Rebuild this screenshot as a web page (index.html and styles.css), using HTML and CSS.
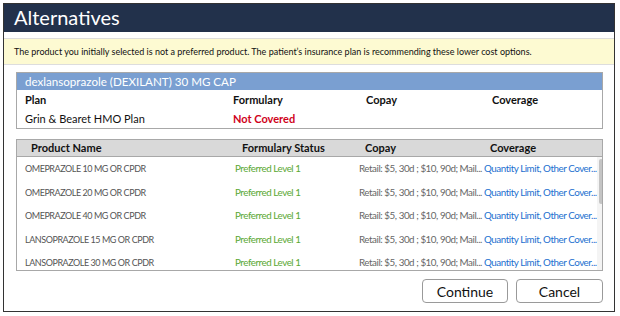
FILE: index.html
```html
<!DOCTYPE html>
<html lang="en">
<head>
    <meta charset="UTF-8">
    <title>Alternatives</title>
    <link rel="stylesheet" href="styles.css">
</head>
<body>
    <div class="dialog">
        <div class="title-bar">Alternatives</div>
        <div class="notice">The product you initially selected is not a preferred product. The patient’s insurance plan is recommending these lower cost options.</div>

        <div class="plan-box">
            <div class="drug-name">dexlansoprazole (DEXILANT) 30 MG CAP</div>
            <div class="plan-row plan-head">
                <span class="c-plan">Plan</span>
                <span class="c-form">Formulary</span>
                <span class="c-copay">Copay</span>
                <span class="c-cov">Coverage</span>
            </div>
            <div class="plan-row">
                <span class="c-plan">Grin &amp; Bearet HMO Plan</span>
                <span class="c-form not-covered">Not Covered</span>
                <span class="c-copay"></span>
                <span class="c-cov"></span>
            </div>
        </div>

        <div class="products">
            <div class="prod-head">
                <span class="p-name">Product Name</span>
                <span class="p-status">Formulary Status</span>
                <span class="p-copay">Copay</span>
                <span class="p-cov">Coverage</span>
            </div>
            <div class="prod-body">
                <div class="prod-rows">
                    <div class="prod-row">
                        <span class="p-name">OMEPRAZOLE 10 MG OR CPDR</span>
                        <span class="p-status">Preferred Level 1</span>
                        <span class="p-copay">Retail: $5, 30d ; $10, 90d; Mail...</span>
                        <span class="p-cov">Quantity Limit, Other Cover...</span>
                    </div>
                    <div class="prod-row">
                        <span class="p-name">OMEPRAZOLE 20 MG OR CPDR</span>
                        <span class="p-status">Preferred Level 1</span>
                        <span class="p-copay">Retail: $5, 30d ; $10, 90d; Mail...</span>
                        <span class="p-cov">Quantity Limit, Other Cover...</span>
                    </div>
                    <div class="prod-row">
                        <span class="p-name">OMEPRAZOLE 40 MG OR CPDR</span>
                        <span class="p-status">Preferred Level 1</span>
                        <span class="p-copay">Retail: $5, 30d ; $10, 90d; Mail...</span>
                        <span class="p-cov">Quantity Limit, Other Cover...</span>
                    </div>
                    <div class="prod-row">
                        <span class="p-name">LANSOPRAZOLE 15 MG OR CPDR</span>
                        <span class="p-status">Preferred Level 1</span>
                        <span class="p-copay">Retail: $5, 30d ; $10, 90d; Mail...</span>
                        <span class="p-cov">Quantity Limit, Other Cover...</span>
                    </div>
                    <div class="prod-row">
                        <span class="p-name">LANSOPRAZOLE 30 MG OR CPDR</span>
                        <span class="p-status">Preferred Level 1</span>
                        <span class="p-copay">Retail: $5, 30d ; $10, 90d; Mail...</span>
                        <span class="p-cov">Quantity Limit, Other Cover...</span>
                    </div>
                </div>
                <div class="scroll-track"><div class="scroll-thumb"></div></div>
            </div>
        </div>

        <div class="buttons">
            <button class="btn btn-continue">Continue</button>
            <button class="btn btn-cancel">Cancel</button>
        </div>
    </div>
</body>
</html>
```

FILE: styles.css
```css
body {
    margin: 0;
    background: #fff;
    font-family: Lato, "Open Sans", sans-serif;
}
.dialog {
    margin: 3px;
    width: 610px;
    height: 307px;
    border: 1px solid #333;
    background: #fff;
}
.title-bar {
    height: 28px;
    background: #22314b;
    color: #fff;
    font-size: 20px;
    line-height: 27px;
    padding-left: 10px;
}
.notice {
    margin-top: 6px;
    height: 25px;
    line-height: 25px;
    background: #fdfad2;
    border-top: 1px solid #ddd;
    border-bottom: 1px solid #ddd;
    font-size: 9px;
    color: #111;
    padding-left: 10px;
}
.plan-box {
    margin: 7px 0 0 12px;
    width: 585px;
    border: 1px solid #a8a8a8;
}
.drug-name {
    height: 17px;
    line-height: 17px;
    background: #7a9fd1;
    color: #fff;
    font-size: 11.6px;
    padding-left: 8px;
}
.plan-row {
    display: flex;
    height: 19px;
    line-height: 19px;
    font-size: 11px;
    color: #111;
}
.plan-head {
    font-weight: bold;
}
.c-plan { width: 208px; padding-left: 8px; }
.c-form { width: 133px; }
.c-copay { width: 126px; }
.c-cov { flex: 1; }
.not-covered {
    color: #d0021b;
    font-weight: bold;
}
.products {
    margin: 10px 0 0 12px;
    width: 585px;
    border: 1px solid #a8a8a8;
}
.prod-head {
    display: flex;
    height: 16px;
    line-height: 16px;
    background: #d9d9d9;
    border-bottom: 1px solid #a8a8a8;
    font-size: 11px;
    font-weight: bold;
    color: #111;
}
.prod-head .p-name { width: 205px; padding-left: 14px; }
.prod-head .p-status { width: 117px; padding-left: 6px; }
.prod-head .p-copay { width: 119px; padding-left: 6px; }
.prod-head .p-cov { flex: 1; padding-left: 6px; }
.prod-body {
    display: flex;
    height: 113px;
    overflow: hidden;
}
.prod-rows {
    flex: 1;
}
.prod-row {
    display: flex;
    height: 23.6px;
    line-height: 23.6px;
    font-size: 9.8px;
    letter-spacing: -0.45px;
    white-space: nowrap;
}
.prod-row .p-name { width: 210px; padding-left: 8px; color: #555; font-size: 9px; }
.prod-row .p-status { width: 124px; color: #5aa832; }
.prod-row .p-copay { width: 125px; color: #666; }
.prod-row .p-cov { flex: 1; color: #1c6fcf; }
.scroll-track {
    width: 8px;
    margin-right: 1px;
    background: #f4f4f4;
}
.scroll-thumb {
    width: 4px;
    height: 45px;
    margin: 2px 0 0 2px;
    background: #c4c4c4;
    border-radius: 2px;
}
.buttons {
    display: flex;
    justify-content: flex-end;
    gap: 8px;
    margin: 8px 11px 0 0;
}
.btn {
    height: 24px;
    font-family: Lato, "Open Sans", sans-serif;
    font-size: 14px;
    color: #111;
    background: #fff;
    border: 1px solid #9a9a9a;
    border-radius: 4px;
    padding: 0;
}
.btn-continue { width: 86px; }
.btn-cancel { width: 87px; }
```
